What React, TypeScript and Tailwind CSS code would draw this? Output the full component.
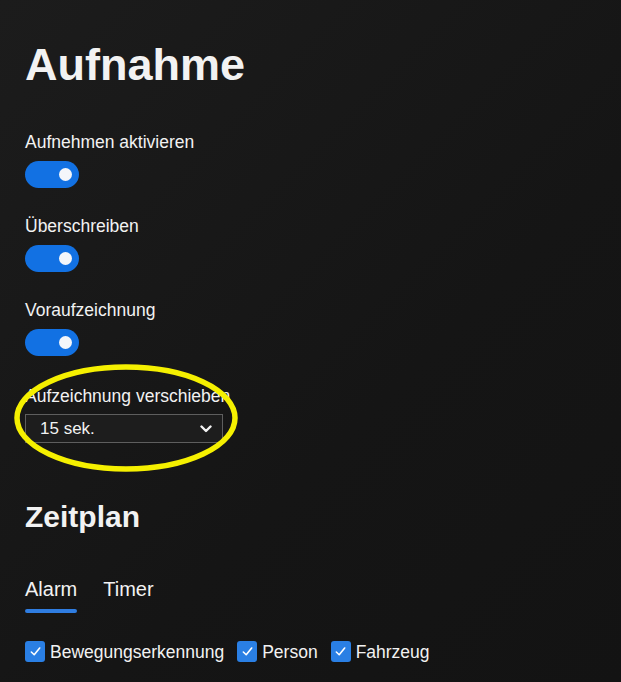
import React from 'react';

const Toggle: React.FC = () => (
  <div className="w-[54px] h-[27px] rounded-full bg-[#1271e3] flex items-center justify-end pr-[7px]">
    <div className="w-[13px] h-[13px] rounded-full bg-[#f4f6fa]" />
  </div>
);

const ToggleRow: React.FC<{ label: string; className?: string }> = ({ label, className }) => (
  <div className={className}>
    <div className="text-[17.5px] leading-[20px]">{label}</div>
    <div className="mt-[9px]">
      <Toggle />
    </div>
  </div>
);

const Check: React.FC<{ label: string }> = ({ label }) => (
  <label className="flex items-center gap-[5px]">
    <span className="w-[20px] h-[21px] rounded-[3px] bg-[#2a7fe4] flex items-center justify-center">
      <svg width="13" height="13" viewBox="0 0 14 14" fill="none">
        <path d="M2.5 7.5 L5.6 10.5 L11.5 3.2" stroke="#fff" strokeWidth="1.7" strokeLinecap="round" strokeLinejoin="round" />
      </svg>
    </span>
    <span className="text-[17.5px] leading-[20px]">{label}</span>
  </label>
);

const App: React.FC = () => (
  <div className="relative min-h-[682px] w-full bg-[linear-gradient(135deg,#1c1c1c_0%,#151515_60%,#131313_100%)] text-[#f2f2f2] font-['Liberation_Sans',Arial,sans-serif] pl-[25px] pt-[42px] overflow-hidden">
    <h1 className="text-[45px] leading-[45px] font-bold">Aufnahme</h1>

    <ToggleRow label="Aufnehmen aktivieren" className="mt-[45px]" />
    <ToggleRow label="Überschreiben" className="mt-[28px]" />
    <ToggleRow label="Voraufzeichnung" className="mt-[28px]" />

    <div className="mt-[30px]">
      <div className="text-[17.5px] leading-[20px]">Aufzeichnung verschieben</div>
      <div className="mt-[8px] w-[198px] h-[29px] border border-[#5e5e5e] bg-[#1d1d1d] flex items-center justify-between pl-[14px] pr-[10px]">
        <span className="text-[17px] leading-[20px]">15 sek.</span>
        <svg width="12" height="8" viewBox="0 0 12 8" fill="none">
          <path d="M1.5 1.5 L6 6 L10.5 1.5" stroke="#f2f2f2" strokeWidth="2.4" strokeLinecap="round" strokeLinejoin="round" />
        </svg>
      </div>
    </div>

    <h2 className="mt-[59px] text-[30px] leading-[30px] font-bold">Zeitplan</h2>

    <div className="mt-[45px] flex gap-[26px]">
      <div className="flex flex-col">
        <span className="text-[20px] leading-[24px]">Alarm</span>
        <span className="mt-[8px] h-[4px] rounded-full bg-[#2f7de1]" />
      </div>
      <span className="text-[20px] leading-[24px]">Timer</span>
    </div>

    <div className="mt-[28px] flex items-center gap-[13px]">
      <Check label="Bewegungserkennung" />
      <Check label="Person" />
      <Check label="Fahrzeug" />
    </div>

    <svg className="absolute left-0 top-0 pointer-events-none" width="621" height="682">
      <ellipse cx="126" cy="418" rx="109" ry="51" fill="none" stroke="#f5f000" strokeWidth="5.5" />
    </svg>
  </div>
);

export default App;
